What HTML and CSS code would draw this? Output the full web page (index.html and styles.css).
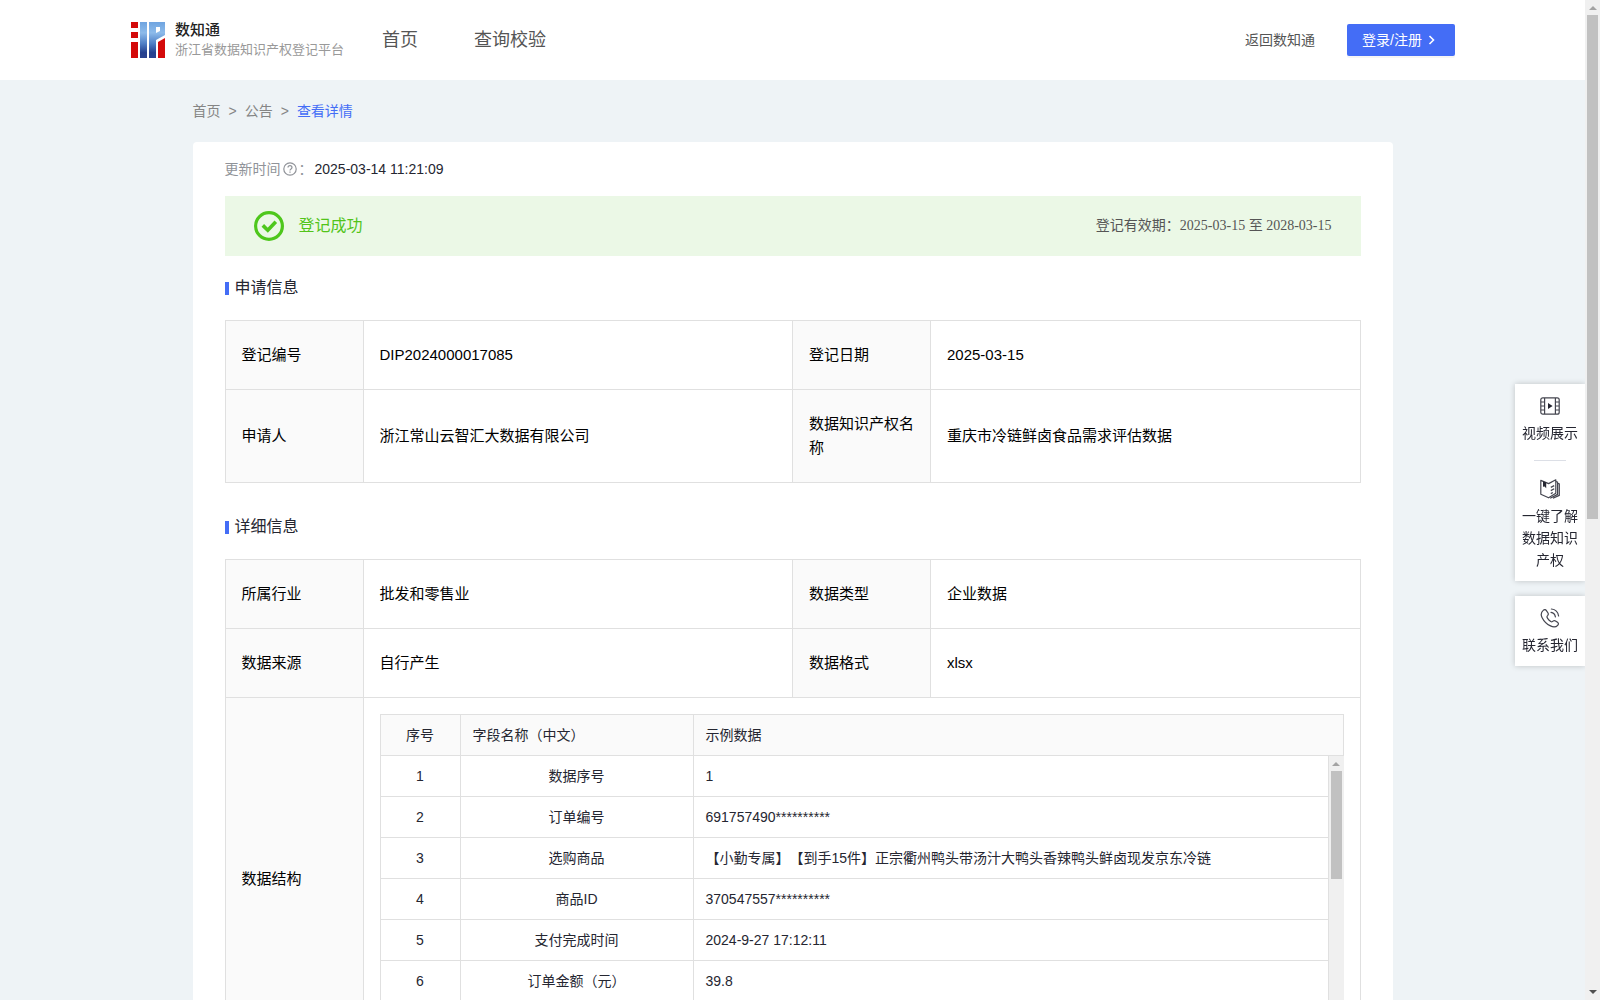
FILE: index.html
```html
<!DOCTYPE html>
<html lang="zh-CN">

<head>
    <meta charset="UTF-8">
    <meta name="viewport" content="width=device-width, initial-scale=1.0">
    <title>浙江省数据知识产权登记平台</title>
    <link rel="stylesheet" href="styles.css">
</head>

<body>
    <div class="page">
        <header class="header">
            <a class="logo" href="#">
                <svg width="34" height="36" viewBox="0 0 34 36">
                    <defs>
                        <linearGradient id="logoBlue" x1="0" y1="0" x2="0" y2="36" gradientUnits="userSpaceOnUse">
                            <stop offset="0" stop-color="#6fa4e0" />
                            <stop offset="0.3" stop-color="#8dbbea" />
                            <stop offset="0.6" stop-color="#4f7fc6" />
                            <stop offset="0.85" stop-color="#25418f" />
                            <stop offset="1" stop-color="#2b4390" />
                        </linearGradient>
                    </defs>
                    <path fill="#d40a0a" d="M0 0h7v6H0zM0 10h7v6H0zM0 20h7v16H0zM27 20l7-4v20h-7z" />
                    <path fill="url(#logoBlue)" d="M9 0h7v36H9z" />
                    <path fill="url(#logoBlue)" fill-rule="evenodd" d="M18 0h16v13l-9 5v18h-7zM25 5v6l4-2V5z" />
                </svg>
                <span class="logo-text">
                    <strong>数知通</strong>
                    <small>浙江省数据知识产权登记平台</small>
                </span>
            </a>
            <nav class="nav">
                <a href="#">首页</a>
                <a href="#">查询校验</a>
            </nav>
            <a class="back-link" href="#">返回数知通</a>
            <button class="login-btn" type="button">登录/注册
                <svg width="8" height="10" viewBox="0 0 8 10" fill="none" stroke="currentColor" stroke-width="1.6">
                    <path d="M1.5 1l4 4-4 4" />
                </svg>
            </button>
        </header>

        <main class="container">
            <div class="breadcrumb">
                <a href="#">首页</a>
                <span>&gt;</span>
                <a href="#">公告</a>
                <span>&gt;</span>
                <a class="current" href="#">查看详情</a>
            </div>

            <div class="card">
                <div class="update-time">
                    <span>更新时间</span>
                    <svg width="14" height="14" viewBox="0 0 14 14" fill="none" stroke="#909399" stroke-width="1.2">
                        <circle cx="7" cy="7" r="6.2" />
                        <path d="M5 5.6c0-2.6 4-2.6 4 0C9 6.9 7 6.9 7 8.4M7 9.6v1.2" />
                    </svg>
                    <span>：</span>
                    <time>2025-03-14 11:21:09</time>
                </div>

                <div class="status">
                    <svg width="30" height="30" viewBox="0 0 30 30" fill="none" stroke="#4ec71c">
                        <circle cx="15" cy="15" r="13.4" stroke-width="3.2" />
                        <path d="M8.8 14.4l5 4.8 8-8.4" stroke-width="3.6" />
                    </svg>
                    <span class="status-text">登记成功</span>
                    <span class="validity">登记有效期：2025-03-15 至 2028-03-15</span>
                </div>

                <section>
                    <h2>申请信息</h2>
                    <table class="info-table">
                        <colgroup>
                            <col class="col-label">
                            <col>
                            <col class="col-label">
                            <col>
                        </colgroup>
                        <tr>
                            <th>登记编号</th>
                            <td>DIP2024000017085</td>
                            <th>登记日期</th>
                            <td>2025-03-15</td>
                        </tr>
                        <tr>
                            <th>申请人</th>
                            <td>浙江常山云智汇大数据有限公司</td>
                            <th>数据知识产权名称</th>
                            <td>重庆市冷链鲜卤食品需求评估数据</td>
                        </tr>
                    </table>
                </section>

                <section>
                    <h2>详细信息</h2>
                    <table class="info-table">
                        <colgroup>
                            <col class="col-label">
                            <col>
                            <col class="col-label">
                            <col>
                        </colgroup>
                        <tr>
                            <th>所属行业</th>
                            <td>批发和零售业</td>
                            <th>数据类型</th>
                            <td>企业数据</td>
                        </tr>
                        <tr>
                            <th>数据来源</th>
                            <td>自行产生</td>
                            <th>数据格式</th>
                            <td>xlsx</td>
                        </tr>
                        <tr>
                            <th>数据结构</th>
                            <td class="field-cell" colspan="3">
                                <div class="fields">
                                    <table class="field-table field-head">
                                        <colgroup>
                                            <col class="col-no">
                                            <col class="col-name">
                                            <col>
                                        </colgroup>
                                        <tr>
                                            <th>序号</th>
                                            <th>字段名称（中文）</th>
                                            <th>示例数据</th>
                                        </tr>
                                    </table>
                                    <div class="field-body">
                                        <div class="field-scroll">
                                            <table class="field-table">
                                                <colgroup>
                                                    <col class="col-no">
                                                    <col class="col-name">
                                                    <col>
                                                </colgroup>
                                                <tr>
                                                    <td>1</td>
                                                    <td>数据序号</td>
                                                    <td>1</td>
                                                </tr>
                                                <tr>
                                                    <td>2</td>
                                                    <td>订单编号</td>
                                                    <td>691757490**********</td>
                                                </tr>
                                                <tr>
                                                    <td>3</td>
                                                    <td>选购商品</td>
                                                    <td>【小勤专属】【到手15件】正宗衢州鸭头带汤汁大鸭头香辣鸭头鲜卤现发京东冷链</td>
                                                </tr>
                                                <tr>
                                                    <td>4</td>
                                                    <td>商品ID</td>
                                                    <td>370547557**********</td>
                                                </tr>
                                                <tr>
                                                    <td>5</td>
                                                    <td>支付完成时间</td>
                                                    <td>2024-9-27 17:12:11</td>
                                                </tr>
                                                <tr>
                                                    <td>6</td>
                                                    <td>订单金额（元）</td>
                                                    <td>39.8</td>
                                                </tr>
                                            </table>
                                        </div>
                                        <div class="scrollbar">
                                            <i class="arrow-up"></i>
                                            <div class="track">
                                                <div class="thumb thumb-fields"></div>
                                            </div>
                                            <i class="arrow-down"></i>
                                        </div>
                                    </div>
                                </div>
                            </td>
                        </tr>
                    </table>
                </section>
            </div>
        </main>
    </div>

    <aside class="side-tools">
        <div class="side-box">
            <a class="side-item" href="#">
                <svg width="20" height="20" viewBox="0 0 20 20" fill="none" stroke="#44454f" stroke-width="1.2">
                    <rect x="0.8" y="1.8" width="18.4" height="16.4" rx="2" />
                    <path d="M4.6 2v16M15.4 2v16M1 6h3.6M1 10h3.6M1 14h3.6M15.4 6H19M15.4 10H19M15.4 14H19" />
                    <path d="M8 7l4.6 3L8 13z" fill="#252631" stroke="none" />
                </svg>
                <span>视频展示</span>
            </a>
            <hr>
            <a class="side-item" href="#">
                <svg width="20" height="20" viewBox="0 0 20 20" fill="none" stroke="#44454f" stroke-width="1.2" stroke-linejoin="round">
                    <path d="M.8 1.4L8.600 4.600 15.800.8v13.400l-7.200 4.600L.8 15.200z" />
                    <path d="M15.800 2.600l1.800.4v12.400l-7.400 3.800M17.600 4.400l1.700.4v11.600l-6.300 2.800M10.800 8.400l3.400-1.800M10.800 11.600l3.400-1.800M10.800 14.600l2-1.100" />
                    <path d="M3 2.200l3.200 1.200v5.800L4.600 7.400 3 7.800z" fill="#252631" stroke="none" />
                </svg>
                <span>一键了解数据知识产权</span>
            </a>
        </div>
        <div class="side-box">
            <a class="side-item" href="#">
                <svg width="20" height="20" viewBox="0 0 20 20" fill="none" stroke="#44454f" stroke-width="1.2" stroke-linecap="round" stroke-linejoin="round">
                    <path d="M3.2 2.4C4.4 1.2 5.6 1.4 6.4 2.6L8 5c.6 1 .4 1.800-.4 2.600-.9.800-.8 1.600 0 2.700 1 1.400 2 2.400 3.200 3.200.9.500 1.600.3 2.200-.3.800-.8 1.600-.9 2.500-.3l2 1.400c1.200.9 1.200 1.900.2 3-1.800 1.900-4.200 2.200-7.200.6C6.600 16 3.800 13 2 9.400.6 6.600 1.200 4.200 3.200 2.400z" />
                    <path d="M11 4.400c2.600.4 4 2 4.400 4.400M11.400 1c4 .4 6.600 3 7.200 7" />
                </svg>
                <span>联系我们</span>
            </a>
        </div>
    </aside>

    <div class="scrollbar page-scrollbar">
        <i class="arrow-up"></i>
        <div class="track">
            <div class="thumb thumb-page"></div>
        </div>
        <i class="arrow-down active"></i>
    </div>
</body>

</html>
```

FILE: styles.css
```css
* {
    box-sizing: border-box;
}

body {
    margin: 0;
    display: flex;
    height: 100vh;
    overflow: hidden;
    background-color: #eef3f6;
    color: #252631;
    font-family: "Liberation Sans", "Noto Sans CJK SC", sans-serif;
    font-size: 14px;
    line-height: 22px;
    text-spacing-trim: space-all;
}

a {
    color: inherit;
    text-decoration: none;
}

svg {
    flex: none;
}

.page {
    flex: 1;
    min-width: 0;
    overflow-y: auto;
    scrollbar-width: none;
}

/* header */

.header {
    display: flex;
    align-items: center;
    height: 80px;
    padding: 0 130px;
    background-color: #fff;
    color: #555;
}

.logo {
    display: flex;
    align-items: center;
    gap: 10px;
    width: 252px;
    padding-left: 1px;
    white-space: nowrap;
}

.logo-text {
    display: flex;
    flex-direction: column;
}

.logo-text strong {
    color: #222;
    font-size: 15px;
    font-weight: 500;
    line-height: 20px;
}

.logo-text small {
    color: #999;
    font-size: 13px;
    line-height: 20px;
}

.nav {
    display: flex;
    flex: 1;
    gap: 56px;
    font-size: 18px;
}

.back-link {
    margin-right: 32px;
}

.login-btn {
    display: flex;
    align-items: center;
    gap: 6px;
    width: 108px;
    height: 32px;
    padding: 0 15px;
    border: none;
    border-radius: 2px;
    background-color: #446df6;
    box-shadow: 0 2px 0 rgba(0, 0, 0, 0.04);
    color: #fff;
    font: inherit;
    white-space: nowrap;
    cursor: pointer;
}

/* content */

.container {
    max-width: 1200px;
    margin: 0 auto;
}

.breadcrumb {
    display: flex;
    align-items: center;
    gap: 8px;
    height: 62px;
    color: #858585;
}

.breadcrumb .current {
    color: #446df6;
}

.card {
    padding: 0 32px 32px;
    border-radius: 4px;
    background-color: #fff;
}

.update-time {
    display: flex;
    align-items: center;
    gap: 2px;
    height: 54px;
    color: #909399;
}

.update-time time {
    color: #252631;
}

.status {
    display: flex;
    align-items: center;
    gap: 15px;
    height: 60px;
    padding: 0 29px;
    background-color: #ebf8e6;
}

.status-text {
    flex: 1;
    color: #52c41a;
    font-size: 16px;
}

.validity {
    color: #555;
    font-family: "Liberation Serif", "Noto Sans CJK SC", serif;
}

section + section {
    margin-top: 12px;
}

h2 {
    display: flex;
    align-items: center;
    gap: 6px;
    height: 64px;
    margin: 0;
    font-size: 16px;
    font-weight: normal;
}

h2::before {
    content: "";
    width: 4px;
    height: 13px;
    background-color: #446df6;
}

.info-table {
    width: 100%;
    border-collapse: collapse;
    table-layout: fixed;
    color: #000;
    font-size: 15px;
    line-height: 24px;
}

.info-table .col-label {
    width: 138px;
}

.info-table th,
.info-table td {
    padding: 22px 16px;
    border: 1px solid #e0e0e0;
    font-weight: normal;
    text-align: left;
}

.info-table th {
    background-color: #fafafa;
}

.info-table .field-cell {
    padding: 16px;
}

/* field list inside the detail table */

.fields {
    border: 1px solid #e0e0e0;
    color: #252631;
    font-size: 14px;
    line-height: 20px;
}

.field-table {
    width: 100%;
    border-spacing: 0;
    table-layout: fixed;
}

.field-table .col-no {
    width: 80px;
}

.field-table .col-name {
    width: 233px;
}

.field-table th,
.field-table td {
    height: 41px;
    padding: 10px 12px;
    border-width: 0 1px 1px 0;
    text-align: center;
}

.field-table th:nth-child(2),
.field-table th:last-child,
.field-table td:last-child {
    text-align: left;
}

.field-head th:last-child {
    border-right: none;
}

.field-body {
    display: flex;
    height: 287px;
    margin-right: -1px;
}

.field-scroll {
    flex: 1;
    overflow-y: auto;
    scrollbar-width: none;
}

/* scrollbars */

.scrollbar {
    display: flex;
    flex: none;
    flex-direction: column;
    align-items: center;
    width: 15px;
    padding: 6px 0;
    background-color: #f0f0f0;
}

.track {
    flex: 1;
    width: 11px;
    margin: 5px 0;
}

.thumb {
    background-color: #c1c1c1;
}

.thumb-page {
    height: 52%;
}

.thumb-fields {
    height: 42%;
}

.arrow-up,
.arrow-down {
    border: 4px solid transparent;
}

.arrow-up {
    border-top: none;
    border-bottom-color: #a3a3a3;
}

.arrow-down {
    border-bottom: none;
    border-top-color: #a3a3a3;
}

.arrow-down.active {
    border-top-color: #505050;
}

/* floating tools */

.side-tools {
    position: fixed;
    top: 384px;
    right: 15px;
    display: flex;
    flex-direction: column;
    gap: 15px;
    width: 70px;
}

.side-box {
    padding: 12px 7px 10px;
    background-color: #fff;
    box-shadow: 0 0 6px rgba(0, 0, 0, 0.2);
}

.side-box hr {
    width: 32px;
    margin: 16px auto 18px;
    border: none;
    border-top: 1px solid #dcdfe6;
}

.side-item {
    display: flex;
    flex-direction: column;
    align-items: center;
    gap: 6px;
    text-align: center;
}

/* the fixed tools must not cast a shadow over the bar */
.page-scrollbar {
    position: relative;
}
```
